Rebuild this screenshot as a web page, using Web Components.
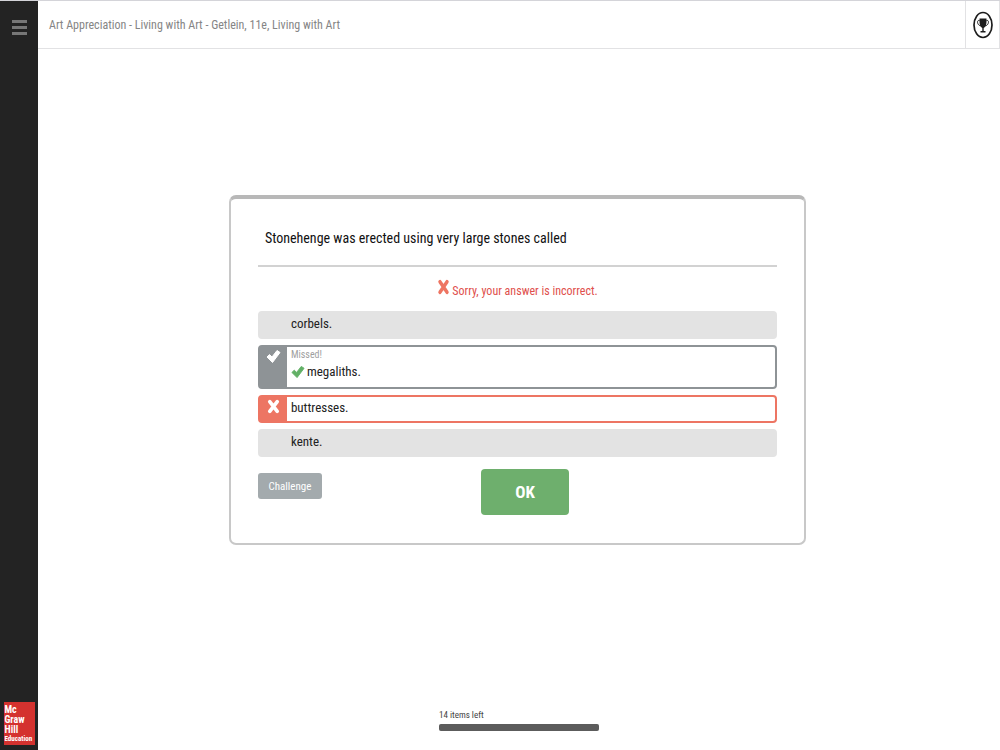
<!DOCTYPE html>
<html lang="en">
<head>
<meta charset="utf-8">
<meta name="viewport" content="width=device-width, initial-scale=1">
<title>Art Appreciation - Living with Art</title>
<style>
    html, body {
        height: 100%;
        margin: 0;
    }
    body {
        font-family: "Roboto Condensed", "Arial Narrow", "Liberation Sans", sans-serif;
        color: #222;
        background: #fff;
    }
</style>
</head>
<body>

<study-app>
    <side-rail slot="rail"></side-rail>
    <top-bar slot="top">Art Appreciation - Living with Art - Getlein, 11e, Living with Art</top-bar>
    <question-card>
        <span slot="question">Stonehenge was erected using very large stones called</span>
        <span slot="feedback">Sorry, your answer is incorrect.</span>
        <answer-row>corbels.</answer-row>
        <answer-row state="missed">megaliths.</answer-row>
        <answer-row state="wrong">buttresses.</answer-row>
        <answer-row>kente.</answer-row>
    </question-card>
    <items-left slot="bottom" count="14"></items-left>
</study-app>

<script>
const CHECK = '<path d="M1 7.5 L3.5 5 L6 7.5 L11 1 L14 3 L6.5 13 Z" stroke-width="1" stroke-linejoin="round"/>';
const CROSS = '<path d="M3 2.5 L10 11.5 M10 2.5 L3 11.5" fill="none" stroke-width="3.4" stroke-linecap="round"/>';

// Attach an open shadow root and fill it
function render(el, html) {
    el.attachShadow({ mode: 'open' }).innerHTML = html;
}

// Page frame: dark rail on the left, header, content, footer
class StudyApp extends HTMLElement {
    constructor() {
        super();
        render(this, `
            <style>
                :host {
                    display: flex;
                    min-height: 100vh;
                }
                .page {
                    flex: 1;
                    display: flex;
                    flex-direction: column;
                    min-width: 0;
                }
                main {
                    flex: 1;
                    display: flex;
                    flex-direction: column;
                    align-items: center;
                    padding-top: 146px;
                }
                footer {
                    display: flex;
                    justify-content: center;
                    padding: 16px 0 19px;
                }
            </style>
            <slot name="rail"></slot>
            <div class="page">
                <slot name="top"></slot>
                <main><slot></slot></main>
                <footer><slot name="bottom"></slot></footer>
            </div>
        `);
    }
}

class SideRail extends HTMLElement {
    constructor() {
        super();
        render(this, `
            <style>
                :host {
                    box-sizing: border-box;
                    display: flex;
                    flex-direction: column;
                    align-items: center;
                    justify-content: space-between;
                    width: 38px;
                    padding: 19px 0 5px;
                    background: #232323;
                    border-top: 1px solid #d4d4d9;
                }
                button {
                    display: flex;
                    padding: 0;
                    border: 0;
                    background: none;
                }
                .logo {
                    box-sizing: border-box;
                    width: 31px;
                    height: 43px;
                    padding: 3px 0 0 1px;
                    background: #d4322f;
                    color: #fff;
                    font-size: 10px;
                    font-weight: bold;
                    line-height: 10px;
                    text-decoration: none;
                }
                .logo span {
                    display: block;
                }
                .logo .small {
                    font-size: 7px;
                    line-height: 8px;
                }
            </style>
            <button type="button" aria-label="Menu">
                <svg width="15" height="15" viewBox="0 0 15 15" fill="#777">
                    <rect width="15" height="3"/>
                    <rect y="6" width="15" height="3"/>
                    <rect y="12" width="15" height="3"/>
                </svg>
            </button>
            <a class="logo" href="#">
                <span>Mc</span><span>Graw</span><span>Hill</span><span class="small">Education</span>
            </a>
        `);
    }
}

class TopBar extends HTMLElement {
    constructor() {
        super();
        render(this, `
            <style>
                :host {
                    display: flex;
                    align-items: stretch;
                    justify-content: space-between;
                    height: 47px;
                    border-top: 1px solid #d4d4d9;
                    border-bottom: 1px solid #e2e2e4;
                }
                h1 {
                    margin: 0;
                    padding-left: 11px;
                    font-size: 12px;
                    font-weight: normal;
                    line-height: 48px;
                    color: #858585;
                }
                button {
                    display: flex;
                    align-items: center;
                    justify-content: center;
                    width: 35px;
                    padding: 0;
                    border: 0;
                    border-left: 1px solid #e2e2e4;
                    border-right: 1px solid #e2e2e4;
                    background: none;
                }
            </style>
            <h1><slot></slot></h1>
            <button type="button" aria-label="Achievements">
                <svg width="20" height="28" viewBox="0 0 20 28">
                    <ellipse cx="10" cy="14" rx="9" ry="12.5" fill="#fff" stroke="#1c1c1c" stroke-width="1.7"/>
                    <path d="M6.5 7.5 H13.5 V11 C13.5 14.5 12 16.5 10.7 17 V20 H12.5 V21.5 H7.5 V20 H9.3 V17 C8 16.5 6.5 14.5 6.5 11 Z" fill="#1c1c1c"/>
                    <path d="M6.5 9.500 C3.5 8.5 4 14.5 7.8 14.8 M13.5 9.500 C16.5 8.5 16 14.5 12.2 14.8" fill="none" stroke="#1c1c1c"/>
                </svg>
            </button>
        `);
    }
}

class QuestionCard extends HTMLElement {
    constructor() {
        super();
        render(this, `
            <style>
                :host {
                    box-sizing: border-box;
                    display: block;
                    width: 60%;
                    margin-right: 3px;
                    padding: 27px 27px 28px;
                    border: 2px solid #c8c8c8;
                    border-top: 4px solid #b8b8b8;
                    border-radius: 7px;
                    background: #fff;
                }
                h2 {
                    margin: 0;
                    padding: 0 7px 15px;
                    border-bottom: 2px solid #d2d2d2;
                    font-size: 14px;
                    font-weight: normal;
                    line-height: 24px;
                    color: #111;
                }
                .feedback {
                    display: flex;
                    justify-content: center;
                    gap: 2px;
                    margin: 12px 0 8px;
                    font-size: 12px;
                    line-height: 24px;
                    color: #e04f4c;
                }
                .answers {
                    display: flex;
                    flex-direction: column;
                    gap: 6px;
                }
                .actions {
                    display: grid;
                    grid-template-columns: 43% auto;
                    justify-content: start;
                    align-items: start;
                    padding-top: 12px;
                }
                button {
                    border: 0;
                    border-radius: 3px;
                    padding: 0;
                    font-family: inherit;
                    color: #fff;
                }
                .challenge {
                    width: 64px;
                    height: 26px;
                    margin-top: 4px;
                    background: #a3aaad;
                    font-size: 11px;
                }
                .ok {
                    width: 88px;
                    height: 46px;
                    border-radius: 4px;
                    background: #6eaf6d;
                    font-size: 17px;
                    font-weight: bold;
                }
            </style>
            <h2><slot name="question"></slot></h2>
            <div class="feedback" role="status">
                <svg width="13" height="16" viewBox="0 0 13 14" preserveAspectRatio="none" stroke="#ee7562">${CROSS}</svg>
                <slot name="feedback"></slot>
            </div>
            <div class="answers" role="list"><slot></slot></div>
            <div class="actions">
                <button type="button" class="challenge">Challenge</button>
                <button type="button" class="ok">OK</button>
            </div>
        `);
    }
}

// One answer. state="missed" is a right answer not picked, state="wrong" a picked wrong one
class AnswerRow extends HTMLElement {
    constructor() {
        super();
        const state = this.getAttribute('state');
        const mark = { missed: CHECK, wrong: CROSS }[state] || '';
        render(this, `
            <style>
                :host {
                    --edge: #e3e3e3;
                    box-sizing: border-box;
                    display: flex;
                    min-height: 28px;
                    border: 2px solid var(--edge);
                    border-radius: 4px;
                    background: #e3e3e3;
                    font-size: 13px;
                    line-height: 22px;
                }
                :host([state]) {
                    background: #fff;
                }
                :host([state="missed"]) {
                    --edge: #8e9396;
                    min-height: 44px;
                }
                :host([state="wrong"]) {
                    --edge: #ed7563;
                }
                .mark {
                    display: flex;
                    justify-content: center;
                    align-items: flex-start;
                    width: 27px;
                    padding-top: 2px;
                    box-sizing: border-box;
                    background: var(--edge);
                }
                .body {
                    padding-left: 4px;
                }
                .note {
                    font-size: 10px;
                    line-height: 16px;
                    color: #a0a0a0;
                }
                .text {
                    display: flex;
                    align-items: center;
                    gap: 2px;
                }
                .note + .text {
                    line-height: 18px;
                }
            </style>
            <div class="mark">${mark && `<svg width="15" height="15" viewBox="0 0 ${state === 'wrong' ? 13 : 15} 14" fill="#fff" stroke="#fff">${mark}</svg>`}</div>
            <div class="body">
                ${state === 'missed' ? '<div class="note">Missed!</div>' : ''}
                <div class="text">
                    ${state === 'missed' ? `<svg width="14" height="14" viewBox="0 0 15 14" fill="#62b066" stroke="#62b066">${CHECK}</svg>` : ''}
                    <span><slot></slot></span>
                </div>
            </div>
        `);
    }

    connectedCallback() {
        this.setAttribute('role', 'listitem');
    }
}

class ItemsLeft extends HTMLElement {
    constructor() {
        super();
        render(this, `
            <style>
                :host {
                    display: block;
                    width: 160px;
                }
                label {
                    display: block;
                    font-size: 9px;
                    line-height: 18px;
                    color: #444;
                }
                progress {
                    display: block;
                    width: 100%;
                    height: 7px;
                    appearance: none;
                    border: 0;
                }
                progress::-webkit-progress-bar {
                    background: #ddd;
                    border-radius: 2px;
                }
                progress::-webkit-progress-value {
                    background: #5c5c5c;
                    border-radius: 2px;
                }
            </style>
            <label for="left">${this.getAttribute('count')} items left</label>
            <progress id="left" value="1" max="1"></progress>
        `);
    }
}

customElements.define('study-app', StudyApp);
customElements.define('side-rail', SideRail);
customElements.define('top-bar', TopBar);
customElements.define('question-card', QuestionCard);
customElements.define('answer-row', AnswerRow);
customElements.define('items-left', ItemsLeft);
</script>
</body>
</html>
